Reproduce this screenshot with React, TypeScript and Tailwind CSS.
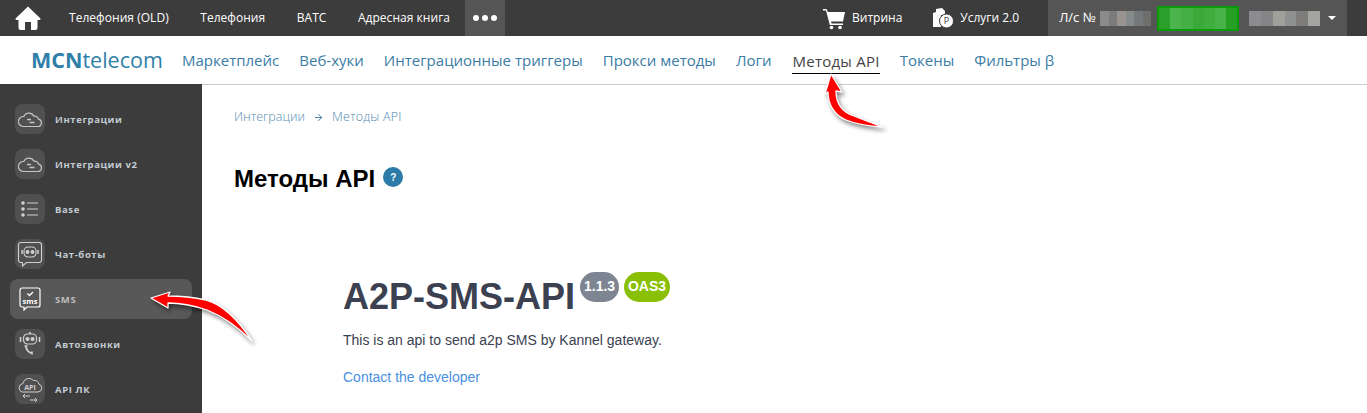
import React from 'react';
import { ArrowRight } from 'lucide-react';

const topLinks = ['Телефония (OLD)', 'Телефония', 'ВАТС', 'Адресная книга'];
const subLinks = ['Маркетплейс', 'Веб-хуки', 'Интеграционные триггеры', 'Прокси методы', 'Логи'];

const CloudIcon = () => (
  <svg width="24" height="18" viewBox="0 0 24 18" fill="none" stroke="#c4c4c4" strokeWidth="1.2">
    <path d="M5 16.500h14.500a3.700 3.700 0 0 0 1-7.300 3.800 3.800 0 0 0-4.500-3A5.600 5.600 0 0 0 5.800 6.500 5 5 0 0 0 5 16.500z" />
    <path d="M9 9.500h4M11.500 12.500h5" strokeWidth="1.6" />
  </svg>
);

const ListIcon = () => (
  <svg width="18" height="16" viewBox="0 0 18 16" fill="none" stroke="#d0d0d0" strokeWidth="1.2">
    <circle cx="2" cy="2" r="1.200" fill="#d0d0d0" />
    <circle cx="2" cy="8" r="1.200" fill="#d0d0d0" />
    <circle cx="2" cy="14" r="1.200" fill="#d0d0d0" />
    <path d="M6 2h11M6 8h11M6 14h11" />
  </svg>
);

const BotIcon = () => (
  <svg width="26" height="26" viewBox="0 0 26 26" fill="none" stroke="#d0d0d0" strokeWidth="1.100">
    <path d="M4 1.500h18a2.500 2.500 0 0 1 2.500 2.500v15a2.500 2.500 0 0 1-2.500 2.500H9.500l-4 3.500v-3.500H4A2.500 2.500 0 0 1 1.500 19V4A2.500 2.500 0 0 1 4 1.500z" />
    <rect x="7" y="6" width="12" height="10" rx="4" />
    <circle cx="10.500" cy="11" r="1.400" fill="#d0d0d0" />
    <circle cx="15.500" cy="11" r="1.400" fill="#d0d0d0" />
    <path d="M5 9v4M21 9v4" strokeWidth="1.500" />
  </svg>
);

const SmsIcon = () => (
  <svg width="22" height="24" viewBox="0 0 22 24" fill="none" stroke="#ffffff" strokeWidth="1.200">
    <path d="M3 1h16a2 2 0 0 1 2 2v15a2 2 0 0 1-2 2H8l-3 3v-3H3a2 2 0 0 1-2-2V3a2 2 0 0 1 2-2z" />
    <path d="M8.500 6.500l2 2 3.500-3.500" strokeWidth="1.400" />
    <text x="11" y="16.500" textAnchor="middle" fontSize="7.500" fontWeight="700" fill="#ffffff" stroke="none" fontFamily="'Open Sans', sans-serif">sms</text>
  </svg>
);

const CallBotIcon = () => (
  <svg width="24" height="26" viewBox="0 0 24 26" fill="none" stroke="#d0d0d0" strokeWidth="1.200">
    <rect x="5.500" y="3" width="13" height="10" rx="4" />
    <circle cx="9.500" cy="8" r="1.500" fill="#d0d0d0" />
    <circle cx="14.500" cy="8" r="1.500" fill="#d0d0d0" />
    <path d="M2.500 6v5M21.500 6v5M12 3V1" strokeWidth="1.600" />
    <path d="M8 15c0 4 3 7 6 7" strokeWidth="1.800" />
    <path d="M6.500 15h3M14 20.500v3" strokeWidth="1.600" />
  </svg>
);

const ApiIcon = () => (
  <svg width="26" height="28" viewBox="0 0 26 28" fill="none" stroke="#d0d0d0" strokeWidth="1">
    <path d="M5 17h16a4 4 0 0 0 1-7.800 4.500 4.500 0 0 0-5.500-3.700A6 6 0 0 0 6 8.500 4.400 4.400 0 0 0 5 17z" />
    <text x="13" y="14.500" textAnchor="middle" fontSize="7" fontWeight="700" fill="#d0d0d0" stroke="none" fontFamily="'Open Sans', sans-serif">API</text>
    <path d="M13 21H6m2-2l-2 2 2 2M13 25h7m-2-2l2 2-2 2" />
  </svg>
);

const menu = [
  { label: 'Интеграции', icon: <CloudIcon /> },
  { label: 'Интеграции v2', icon: <CloudIcon /> },
  { label: 'Base', icon: <ListIcon /> },
  { label: 'Чат-боты', icon: <BotIcon /> },
  { label: 'SMS', icon: <SmsIcon />, active: true },
  { label: 'Автозвонки', icon: <CallBotIcon /> },
  { label: 'API ЛК', icon: <ApiIcon /> },
];

const grayBlur = ['#8b8b8b', '#7c7c7c', '#9a9490', '#858a8a', '#74787a', '#6e6e6c'];
const greenBlur = ['#2aa02a', '#4cb44c', '#45b045', '#3aa93a', '#3fae3f', '#47b247', '#25a025'];
const grayBlur2 = ['#8c8c90', '#858587', '#a0a09a', '#8f9090', '#7d7c7a', '#a4a4a0'];

const Blur = ({ colors, className }: { colors: string[]; className: string }) => (
  <div className={`flex ${className}`}>
    {colors.map((c, i) => (
      <span key={i} className="h-full flex-1" style={{ backgroundColor: c }} />
    ))}
  </div>
);

// red callout arrow, drawn over the page
const Arrow = ({ d, className, w, h }: { d: string; className: string; w: number; h: number }) => (
  <svg
    className={`absolute drop-shadow-[2px_3px_2px_rgba(0,0,0,0.45)] ${className}`}
    width={w}
    height={h}
    viewBox={`0 0 ${w} ${h}`}
  >
    <path d={d} fill="#ff0000" stroke="#ffffff" strokeWidth="1.300" strokeLinejoin="round" />
  </svg>
);

export default function App() {
  return (
    <div className="relative w-[1367px] h-[413px] overflow-hidden bg-white font-['Open_Sans',sans-serif]">
      <header className="flex h-9 bg-[#3c3c3c] text-white">
        <div className="flex w-[54px] items-center justify-center pl-[2px]">
          <svg width="26" height="24" viewBox="0 0 26 24" fill="#ffffff">
            <path d="M13 0.500 L25.500 12.500 Q26 14 24 14 L22.500 14 L22.500 22 Q22.500 24 20.500 24 L16 24 L16 16 L10 16 L10 24 L5.500 24 Q3.500 24 3.500 22 L3.500 14 L2 14 Q0 14 0.500 12.500 Z" />
          </svg>
        </div>
        <nav className="flex items-center gap-[31.5px] pl-[15px] text-[12px] tracking-[0.04px]">
          {topLinks.map((link) => (
            <span key={link}>{link}</span>
          ))}
        </nav>
        <div className="ml-[15px] flex w-[40px] items-center justify-center gap-[3px] bg-[#555555]">
          <span className="size-[6px] rounded-full bg-white" />
          <span className="size-[6px] rounded-full bg-white" />
          <span className="size-[6px] rounded-full bg-white" />
        </div>
        <div className="ml-[318px] flex items-center gap-[7px] text-[12px]">
          <svg width="22" height="24" viewBox="0 0 22 24" fill="#ffffff">
            <path d="M0 3h3.500l1.500 3H22l-2 9.500H8l.6 2H20V19H6.800L3 4.500H0z" />
            <circle cx="8.500" cy="21.500" r="1.800" />
            <circle cx="17" cy="21.500" r="1.800" />
          </svg>
          <span>Витрина</span>
        </div>
        <div className="ml-[30px] flex items-center gap-[6px] text-[12px]">
          <svg width="22" height="22" viewBox="0 0 22 22">
            <path d="M1 6l3-1V2l6-1 3 3v4H1z" fill="#ffffff" />
            <path d="M1 6h8v14H1z" fill="#ffffff" />
            <circle cx="14.500" cy="14" r="7" fill="#ffffff" stroke="#3c3c3c" />
            <text x="14.500" y="17" textAnchor="middle" fontSize="9" fill="#3c3c3c" fontFamily="'Open Sans', sans-serif">Р</text>
          </svg>
          <span>Услуги 2.0</span>
        </div>
        <div className="ml-[29px] flex w-[299px] items-center bg-[#555555] pl-[11px] text-[13px]">
          <span className="w-[41px] shrink-0">Л/с №</span>
          <Blur colors={grayBlur} className="h-[15px] w-[51px]" />
          <Blur colors={greenBlur} className="ml-[6px] h-[25px] w-[82px] border-2 border-[#0a9a0a]" />
          <Blur colors={grayBlur2} className="ml-[10px] h-[15px] w-[71px]" />
          <span className="ml-[8px] border-x-[4px] border-t-[4px] border-x-transparent border-t-white" />
        </div>
      </header>

      <div className="flex h-[49px] items-center border-b border-[#cccccc] text-[15px] text-[#3a7ca5]">
        <div className="w-[182px] pl-[31px] text-[21.5px] leading-none text-[#2f7fa8]">
          <span className="font-bold">MCN</span>telecom
        </div>
        <nav className="flex items-center gap-[20px]">
          {subLinks.map((link) => (
            <span key={link}>{link}</span>
          ))}
          <span className="ml-[1px] mt-[4px] border-b border-black pb-[2px] leading-[20px] tracking-[0.25px] text-[#444444]">Методы API</span>
          <span>Токены</span>
          <span>Фильтры β</span>
        </nav>
      </div>

      <div className="flex h-[328px]">
        <aside className="mt-[-1px] flex w-[202px] shrink-0 flex-col gap-[5px] bg-[#3c3c3c] px-[10px] pt-[15px]">
          {menu.map((item) => (
            <div
              key={item.label}
              className={`flex h-[40px] items-center gap-[10px] rounded-lg px-[5px] ${item.active ? 'bg-[#585858]' : ''}`}
            >
              <div className={`flex size-[30px] items-center justify-center rounded-lg ${item.active ? '' : 'bg-[#505050]'}`}>
                {item.icon}
              </div>
              <span className={`pt-[2px] text-[9.5px] font-bold tracking-[0.6px] ${item.active ? 'text-[#bdbdbd]' : 'text-[#c3ccd3]'}`}>
                {item.label}
              </span>
            </div>
          ))}
        </aside>

        <main className="flex-1 pl-[32px]">
          <div className="mt-[23px] flex items-center text-[12.5px] font-light text-[#4f8bb0]">
            <span>Интеграции</span>
            <ArrowRight className="mx-[8px] size-[11px] text-[#3a7ca5]" strokeWidth={2} />
            <span className="tracking-[0.2px]">Методы API</span>
          </div>
          <div className="mt-[38px] flex items-center font-['Liberation_Sans',sans-serif]">
            <h1 className="text-[24px] font-bold leading-[28px] text-black">Методы API</h1>
            <span className="ml-[8px] mt-[-3px] flex size-5 items-center justify-center rounded-full bg-[#2b7aa8] text-[10px] font-bold text-white">?</span>
          </div>
          <section className="ml-[109px] mt-[81px] font-['Liberation_Sans',sans-serif] text-[#3b4151]">
            <div className="flex items-start">
              <h2 className="text-[36px] font-bold leading-[45px]">A2P-SMS-API</h2>
              <span className="ml-[5px] mt-[-2px] flex h-[30px] w-[39px] items-center justify-center rounded-[15px] bg-[#7d8492] text-[14px] font-bold text-white">1.1.3</span>
              <span className="ml-[5px] mt-[-2px] flex h-[30px] w-[46px] items-center justify-center rounded-[15px] bg-[#89bf04] text-[14px] font-bold text-white">OAS3</span>
            </div>
            <p className="mt-[11px] text-[14px] leading-[20px]">This is an api to send a2p SMS by Kannel gateway.</p>
            <p className="mt-[17px] text-[14px] leading-[20px] text-[#4990e2]">Contact the developer</p>
          </section>
        </main>
      </div>

      <Arrow
        className="left-[820px] top-[70px]"
        w={72}
        h={66}
        d="M11 4 L22 22 L16 21 C16 34 22 42 34 46 C44 50 54 54 63 57 C48 56 36 54 26 50 C14 45 8 34 8 22 L5 24 Z"
      />
      <Arrow
        className="left-[145px] top-[285px]"
        w={116}
        h={64}
        d="M6 13 L25 7 L23 11 C40 11 52 13 61 15 C76 19 92 33 107 56 C95 44 80 32 62 25 C50 21 36 18 23 18 L23 23 Z"
      />
    </div>
  );
}
